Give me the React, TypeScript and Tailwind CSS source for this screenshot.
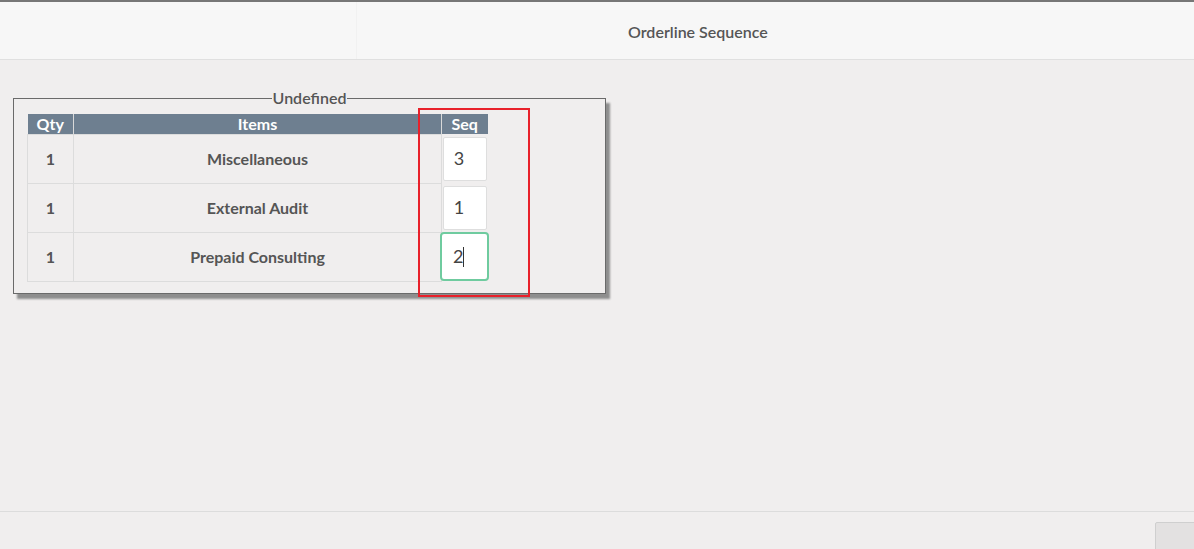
// Модалка «Orderline Sequence»: таблица позиций с полями порядка
const ROWS = [
  { qty: 1, item: 'Miscellaneous', seq: '3' },
  { qty: 1, item: 'External Audit', seq: '1' },
  { qty: 1, item: 'Prepaid Consulting', seq: '2', focused: true },
]

export default function App() {
  return (
    <div className="h-[549px] w-[1194px] flex flex-col bg-[#f0eeee] overflow-hidden font-['Lato',sans-serif] text-[#555]">
      {/* ─── Полоска фона за модалкой ─── */}
      <div className="h-[2px] bg-[#777] shrink-0" />

      {/* ─── Шапка ─── */}
      <div className="h-[58px] shrink-0 bg-[#f7f7f7] border-b border-[#e0e0e0] flex items-center">
        <div className="w-[357px] h-full border-r border-[#f1f1f1]" />
        <h2 className="ml-[271px] mt-[2px] text-[16px] font-semibold text-[#555]">
          Orderline Sequence
        </h2>
      </div>

      {/* ─── Тело ─── */}
      <div className="flex-1 relative">
        <fieldset className="mt-[29px] ml-[13px] w-[593px] border border-[#6a6a6a] px-[13px] pt-[7px] pb-[11px] shadow-[4px_5px_2px_#8e8e8e]">
          <legend className="mx-auto px-[1px] text-[16px] font-semibold text-[#555] leading-[18px]">
            Undefined
          </legend>
          <table className="border-collapse text-[16px] font-bold text-[#555]">
            <thead>
              <tr className="bg-[#6e7f90] text-white h-[20px]">
                <th className="w-[46px] border-r border-[#d9d9d9] font-bold leading-none">Qty</th>
                <th className="w-[368px] border-r border-[#d9d9d9] font-bold leading-none">Items</th>
                <th className="w-[46px] font-bold leading-none">Seq</th>
              </tr>
            </thead>
            <tbody>
              {ROWS.map(row => (
                <tr key={row.item} className="h-[49px]">
                  <td className="border border-[#dcdcdc] text-center leading-none">{row.qty}</td>
                  <td className="border border-[#dcdcdc] text-center leading-none">{row.item}</td>
                  <td className="border-l border-[#dcdcdc] p-0 relative">
                    {row.focused ? (
                      <div className="absolute left-[-2px] top-[0px] w-[49px] h-[49px] bg-white border-[2.5px] border-[#6fcb9f] rounded-[4px] flex items-center pl-[11px] text-[18px] font-normal text-[#444]">
                        {row.seq}
                        <span className="w-px h-[20px] bg-[#333]" />
                      </div>
                    ) : (
                      <div className="mx-auto w-[44px] h-[44px] bg-white border border-[#dedede] rounded-[2px] flex items-center pl-[10px] text-[18px] font-normal text-[#444]">
                        {row.seq}
                      </div>
                    )}
                  </td>
                </tr>
              ))}
            </tbody>
          </table>
        </fieldset>

        {/* Красная рамка — аннотация поверх */}
        <div className="absolute left-[418px] top-[48px] w-[112px] h-[189px] border-2 border-[#e8202a] pointer-events-none" />
      </div>

      {/* ─── Подвал ─── */}
      <div className="h-[38px] shrink-0 border-t border-[#dcdcdc] relative">
        <div className="absolute left-[1155px] top-[10px] w-[60px] h-[40px] bg-[#e3e1e1] border border-[#cfcfcf] rounded-tl-[2px]" />
      </div>
    </div>
  )
}
